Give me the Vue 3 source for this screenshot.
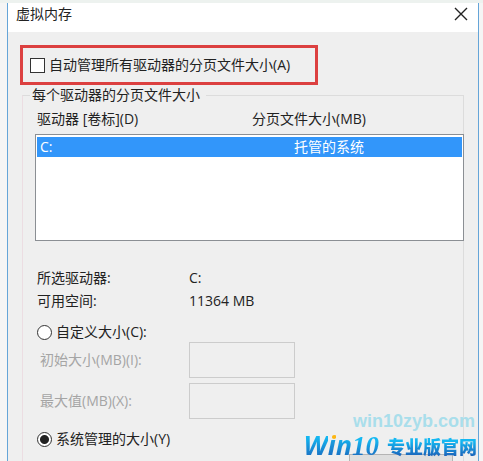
<script setup>
import { ref } from 'vue'

const autoManage = ref(false)
const mode = ref('system')
const drives = [{ name: 'C:', size: '托管的系统' }]
const info = [
  { label: '所选驱动器:', value: 'C:' },
  { label: '可用空间:', value: '11364 MB' },
]
const fields = [
  { id: 'initial', label: '初始大小(MB)(I):' },
  { id: 'maximum', label: '最大值(MB)(X):' },
]
</script>

<template>
  <div class="page">
    <main class="dialog">
      <header class="titlebar">
        <h1 class="title">虚拟内存</h1>
        <button class="close" type="button" aria-label="关闭">
          <svg viewBox="0 0 14 14" width="14" height="14">
            <path d="M1 1L13 13M13 1L1 13" stroke="#222" stroke-width="1.4" fill="none" />
          </svg>
        </button>
      </header>

      <div class="content">
        <label class="auto">
          <input v-model="autoManage" class="check" type="checkbox" />
          <span>自动管理所有驱动器的分页文件大小(A)</span>
        </label>

        <fieldset class="group">
          <legend>每个驱动器的分页文件大小</legend>
          <table class="drives">
            <thead>
              <tr>
                <th>驱动器 [卷标](D)</th>
                <th>分页文件大小(MB)</th>
              </tr>
            </thead>
          </table>
          <div class="list">
            <table class="drives">
              <tbody>
                <tr v-for="d in drives" :key="d.name" class="selected">
                  <td>{{ d.name }}</td>
                  <td>{{ d.size }}</td>
                </tr>
              </tbody>
            </table>
          </div>

          <dl class="info">
            <div v-for="i in info" :key="i.label" class="pair">
              <dt>{{ i.label }}</dt>
              <dd>{{ i.value }}</dd>
            </div>
          </dl>

          <label class="option">
            <input v-model="mode" class="radio" type="radio" name="mode" value="custom" />
            <span>自定义大小(C):</span>
          </label>
          <div class="fields">
            <div v-for="f in fields" :key="f.id" class="field">
              <label :for="f.id">{{ f.label }}</label>
              <input :id="f.id" type="text" :disabled="mode !== 'custom'" />
            </div>
          </div>
          <label class="option system">
            <input v-model="mode" class="radio" type="radio" name="mode" value="system" />
            <span>系统管理的大小(Y)</span>
          </label>
          <div class="last">
            <button class="set" type="button" aria-label="设置"></button>
          </div>
        </fieldset>
      </div>
    </main>

    <div class="watermark">
      <span class="site">win10zyb.com</span>
      <span class="brand">
        <span class="win"><span class="blue">W</span><span class="letter-i">i</span><span class="blue">n</span><span class="blue ten">10</span></span>
        <span class="name blue">专业版官网</span>
      </span>
    </div>
  </div>
</template>

<style>
body {
  background: #edf2ef;
}
</style>

<style scoped>
.page {
  position: relative;
  box-sizing: border-box;
  height: 100vh;
  padding: 3px 4px 0 7px;
  overflow: hidden;
  background: linear-gradient(#edf2ef 3px, #f5f5f5 3px);
  color: #222;
  font: 14px/20px "Open Sans", "Noto Sans CJK SC", sans-serif;
}
.dialog {
  border: solid #65a5d8;
  border-width: 0 1px;
  background: #efefef;
}
.titlebar {
  display: flex;
  align-items: center;
  justify-content: space-between;
  box-sizing: border-box;
  height: 29px;
  padding: 0 10px 8px 8px;
  background: #fff;
}
.title {
  margin: 0;
  font-size: 14px;
  font-weight: 400;
}
.close {
  display: flex;
  padding: 0;
  border: 0;
  background: none;
}
.content {
  padding: 13px 14px 0 12px;
}
.auto {
  display: flex;
  align-items: center;
  gap: 4px;
  box-sizing: border-box;
  width: fit-content;
  height: 40px;
  padding: 0 25px 0 7px;
  border: 3px solid #dc4040;
}
.check,
.radio {
  appearance: none;
  flex: none;
  box-sizing: border-box;
  width: 15px;
  height: 15px;
  margin: 0;
  border: 1px solid #333;
  background: #fff;
}
.check:checked {
  background: #333;
}
.radio {
  border-radius: 50%;
}
.radio:checked {
  background: radial-gradient(circle, #222 4px, #fff 5px);
}
.group {
  min-width: 0;
  margin: 0 0 0 2px;
  padding: 4px 0 0 12px;
  border: 1px solid #dcdcdc;
  border-left-color: #ecdde2;
}
legend {
  margin-left: -5px;
  padding: 0 6px 0 2px;
}
.drives {
  width: 100%;
  border-collapse: collapse;
  table-layout: fixed;
}
.drives th {
  padding: 0 0 0 2px;
  font-weight: 400;
  text-align: left;
}
.drives th:last-child {
  width: 211px;
}
.list {
  box-sizing: border-box;
  height: 107px;
  margin: 5px -1px 0 0;
  padding: 2px 1px;
  border: 1px solid #8b8f94;
  background: #fff;
}
.selected {
  background: #3296fa;
  color: #fff;
}
.drives td {
  padding: 0 0 0 3px;
}
.drives td:last-child {
  width: 168px;
}
.info {
  margin: 25px 0 10px;
}
.pair {
  display: grid;
  grid-template-columns: 152px 1fr;
  padding-left: 2px;
  line-height: 23px;
}
.pair dd {
  margin: 0;
}
.option {
  display: flex;
  align-items: center;
  gap: 4px;
  width: fit-content;
  padding-left: 2px;
}
.fields {
  display: grid;
  gap: 5px;
}
.field {
  display: grid;
  grid-template-columns: 149px 106px;
  align-items: center;
  padding-left: 5px;
  color: #a5a5a5;
}
.field input {
  box-sizing: border-box;
  width: 100%;
  height: 36px;
  padding: 0 4px;
  border: 1px solid #ccc;
  background: #efefef;
  font: inherit;
}
.system {
  margin-top: 10px;
}
.last {
  display: flex;
  justify-content: flex-end;
  margin: 5px 10px 0 0;
}
.set {
  width: 104px;
  height: 30px;
  border: 1px solid #b4b4b4;
  background: #dedede;
}
.watermark {
  position: absolute;
  right: 6px;
  bottom: 0;
  display: flex;
  flex-direction: column;
  align-items: flex-end;
}
.site {
  padding-right: 2px;
  color: #a9deeb;
  font: 700 18px/20px "Liberation Sans", sans-serif;
}
.brand {
  display: flex;
  align-items: center;
  gap: 4px;
  height: 30px;
}
.blue {
  background: linear-gradient(#14b8f2 30%, #1b66bc 90%);
  background-clip: text;
  color: transparent;
  white-space: nowrap;
}
.win {
  padding: 0 2px 2px;
  font: italic 700 27px/30px "Open Sans", sans-serif;
  white-space: nowrap;
}
.letter-i {
  background: linear-gradient(#fdb714 38%, #1b9fe0 38%, #1b66bc 90%);
  background-clip: text;
  color: transparent;
}
.ten {
  padding-right: 2px;
  font-family: "Liberation Serif", serif;
}
.name {
  font: 900 18px/24px "Noto Sans CJK SC", sans-serif;
}
</style>
